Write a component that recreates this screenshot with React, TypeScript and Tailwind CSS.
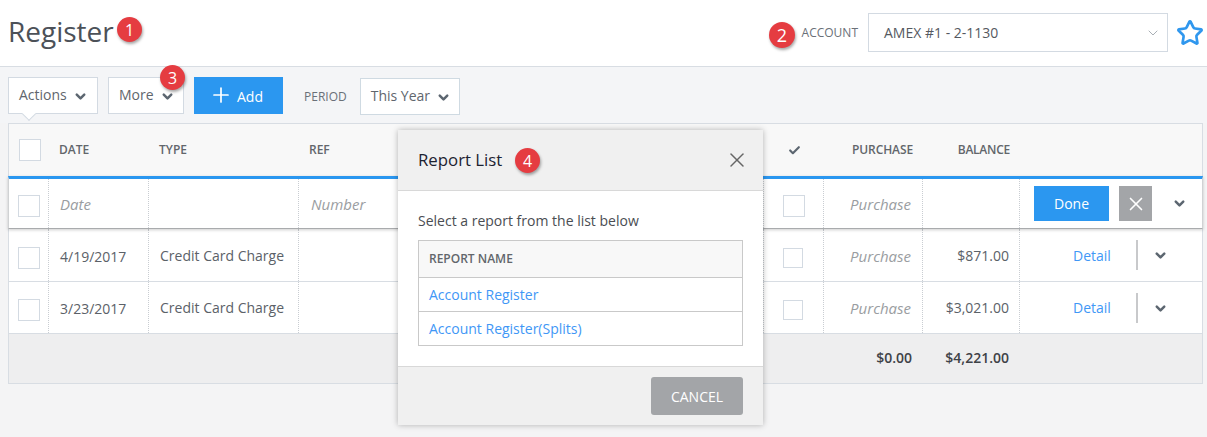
import React from "react";
import { ChevronDown, Star, X, Plus, Check } from "lucide-react";

const cols = "grid grid-cols-[40px_100px_150px_465px_60px_99px_97px_183px]";
const cell = "border-r border-dotted border-[#c9cdd2] flex items-center";

function Badge({ n, className }: { n: string; className: string }) {
  return (
    <span className={`absolute z-30 flex h-[25px] w-[25px] items-center justify-center rounded-full bg-[#e53c41] text-[16px] leading-none text-white shadow-[1px_2px_3px_rgba(0,0,0,0.35)] ${className}`}>
      {n}
    </span>
  );
}

function Box({ className = "" }: { className?: string }) {
  return <span className={`block h-[22px] w-[22px] border border-[#d3dae2] bg-white ${className}`} />;
}

function Chev({ className = "" }: { className?: string }) {
  return <ChevronDown size={15} strokeWidth={4} className={`text-[#5c6670] ${className}`} />;
}

function Row({ date, bal, h }: { date: string; bal: string; h: string }) {
  return (
    <div className={`${cols} ${h} border-b border-[#d8dde3] bg-white text-[#5b6168]`}>
      <div className={`${cell} pl-[9px]`}><Box className="mt-[5px]" /></div>
      <div className={`${cell} pl-[11px] pt-[2px]`}>{date}</div>
      <div className={`${cell} pl-[11px]`}>Credit Card Charge</div>
      <div className={cell} />
      <div className={`${cell} justify-center pr-[1px]`}><Box className="mt-[5px] !h-[20px] !w-[20px]" /></div>
      <div className={`${cell} justify-end pr-[11px] pt-[2px] text-[15px] italic text-[#9a9da1]`}>Purchase</div>
      <div className={`${cell} justify-end pr-[10px]`}>{bal}</div>
      <div className="flex items-center">
        <a className="ml-[53px] w-[38px] text-[#3f97f6]">Detail</a>
        <span className="ml-[25px] h-[30px] w-[2px] bg-[#c8c9cb]" />
        <Chev className="ml-[15px] mt-[1px]" />
      </div>
    </div>
  );
}

export default function App() {
  return (
    <div className="relative h-[437px] w-[1207px] overflow-hidden bg-[#f4f4f5] font-['Open_Sans',sans-serif] text-[14px] text-[#5b6168]">
      <header className="flex h-[67px] items-center justify-between border-b border-[#d8dde3] bg-white pl-2 pr-[3px]">
        <h1 className="-mt-[5px] text-[28px] font-normal leading-none text-[#4c5158]">Register</h1>
        <div className="-mt-[1px] flex items-center">
          <span className="mr-[10px] text-[12px] text-[#6a7078]">ACCOUNT</span>
          <div className="flex h-[39px] w-[300px] items-center justify-between border border-[#d3dae2] bg-white pl-[15px] pr-[6px] text-[#55595f]">
            <span>AMEX #1 - 2-1130</span>
            <ChevronDown size={16} strokeWidth={1.5} className="text-[#a9afb5]" />
          </div>
          <Star size={28} strokeWidth={2.3} className="ml-[8px] text-[#2f97ee]" />
        </div>
      </header>

      <div className="flex h-[56px] items-start bg-[#f4f5f7] pl-2 pt-[10px]">
        <button className="relative flex h-[37px] w-[90px] items-center border border-[#d3dae2] bg-white pb-[2px] pl-[10px] text-[#5f666d]">
          Actions<Chev className="ml-[6px] mt-[4px]" />
          <span className="absolute bottom-[-6px] left-[15px] h-[10px] w-[10px] rotate-45 border-b border-r border-[#d3dae2] bg-white" />
        </button>
        <button className="ml-[10px] flex h-[37px] w-[76px] items-center border border-[#d3dae2] bg-white pb-[2px] pl-[10px] text-[#5f666d]">
          More<Chev className="ml-[6px] mt-[4px]" />
        </button>
        <button className="ml-[10px] flex h-[37px] w-[89px] items-center bg-[#2b97f0] pl-[15px] text-white">
          <Plus size={24} strokeWidth={1.7} className="-mt-[1px]" /><span className="ml-[4px] mt-[1px]">Add</span>
        </button>
        <span className="ml-[21px] mt-[11px] text-[12px] text-[#6a7078]">PERIOD</span>
        <button className="ml-[13px] mt-[1px] flex h-[37px] w-[100px] items-center border border-[#cfdae2] bg-white pb-[2px] pl-[10px] text-[#5f666d]">
          This Year<Chev className="ml-[6px] mt-[4px]" />
        </button>
      </div>

      <section className="ml-2 w-[1195px] border-x border-t border-[#d8dde3] bg-white">
        <div className={`${cols} h-[52px] bg-[#f8f8f8] text-[12px] font-semibold text-[#62666b]`}>
          <div className="flex items-center pl-[10px]"><Box /></div>
          <div className="flex items-center pl-[10px]">DATE</div>
          <div className="flex items-center pl-[10px]">TYPE</div>
          <div className="flex items-center pl-[10px]">REF</div>
          <div className="flex items-center justify-center pl-[1px]"><Check size={13} strokeWidth={4} className="text-[#5c6670]" /></div>
          <div className="flex items-center justify-end pr-[10px] tracking-[-0.1px]">PURCHASE</div>
          <div className="flex items-center justify-end pr-[10px] tracking-[-0.25px]">BALANCE</div>
          <div />
        </div>
        <div className={`${cols} relative z-10 -mx-px h-[53px] w-[1195px] border-x border-b border-t-[3px] border-x-[#d0d2d4] border-b-[#a9abad] border-t-[#2b97f0] bg-white shadow-[0_1px_3px_rgba(0,0,0,0.2)]`}>
          <div className={`${cell} pl-[9px]`}><Box className="mt-[4px]" /></div>
          <div className={`${cell} pl-[11px] pt-[2px] text-[15px] italic text-[#9a9da1]`}>Date</div>
          <div className={cell} />
          <div className={`${cell} pl-[12px] pt-[2px] text-[15px] italic text-[#9a9da1]`}>Number</div>
          <div className={`${cell} justify-center pl-[1px]`}><Box className="mt-[4px]" /></div>
          <div className={`${cell} justify-end pr-[11px] pt-[2px] text-[15px] italic text-[#9a9da1]`}>Purchase</div>
          <div className={cell} />
          <div className="flex items-center pl-[14px]">
            <button className="h-[35px] w-[75px] bg-[#2b97f0] text-white">Done</button>
            <button className="ml-[10px] flex h-[35px] w-[33px] items-center justify-center bg-[#a3a5a8] text-white"><X size={22} strokeWidth={1.8} /></button>
            <Chev className="ml-[20px]" />
          </div>
        </div>
        <Row date="4/19/2017" bal="$871.00" h="h-[53px]" />
        <Row date="3/23/2017" bal="$3,021.00" h="h-[52px]" />
        <div className={`${cols} h-[50px] border-b border-[#d8dde3] bg-[#eeeeef] font-semibold text-[#3e4247]`}>
          <div className="col-span-5" />
          <div className="flex items-center justify-end pb-[2px] pr-[11px]">$0.00</div>
          <div className="flex items-center justify-end pb-[2px] pr-[11px]">$4,221.00</div>
          <div />
        </div>
      </section>

      <div className="absolute left-[398px] top-[130px] z-20 w-[365px] bg-white shadow-[0_0_6px_rgba(0,0,0,0.28)]">
        <div className="flex h-[61px] items-center justify-between border-b border-[#d8d8d8] bg-[#f0f0f0] pl-[20px] pr-[14px]">
          <h2 className="-mt-[1px] text-[16.8px] font-normal text-[#1c2230]">Report List</h2>
          <X size={24} strokeWidth={1.5} className="text-[#666]" />
        </div>
        <div className="h-[175px] px-[20px] pt-[20px]">
          <p className="h-[29px] leading-[19px] text-[#4a4d52]">Select a report from the list below</p>
          <div className="border border-[#c9c9c9]">
            <div className="flex h-[37px] items-center border-b border-[#c9c9c9] bg-[#f8f8f8] pl-[10px] text-[12px] font-semibold text-[#62666b]">REPORT NAME</div>
            <div className="flex h-[34px] items-center border-b border-[#c9c9c9] pl-[10px] text-[#3f97f6]">Account Register</div>
            <div className="flex h-[33px] items-center pl-[10px] text-[#3f97f6]">Account Register(Splits)</div>
          </div>
        </div>
        <div className="flex h-[59px] items-center justify-end border-t border-[#d8d8d8] bg-[#f0f0f0] pr-[20px]">
          <button className="h-[38px] w-[92px] rounded-[3px] bg-[#a3a5a8] text-white">CANCEL</button>
        </div>
      </div>

      <Badge n="1" className="left-[117px] top-[17px]" />
      <Badge n="3" className="left-[160px] top-[65px]" />
      <Badge n="2" className="left-[769px] top-[22px] !h-[26px] !w-[26px] !text-[18px]" />
      <Badge n="4" className="left-[515px] top-[148px]" />
    </div>
  );
}
